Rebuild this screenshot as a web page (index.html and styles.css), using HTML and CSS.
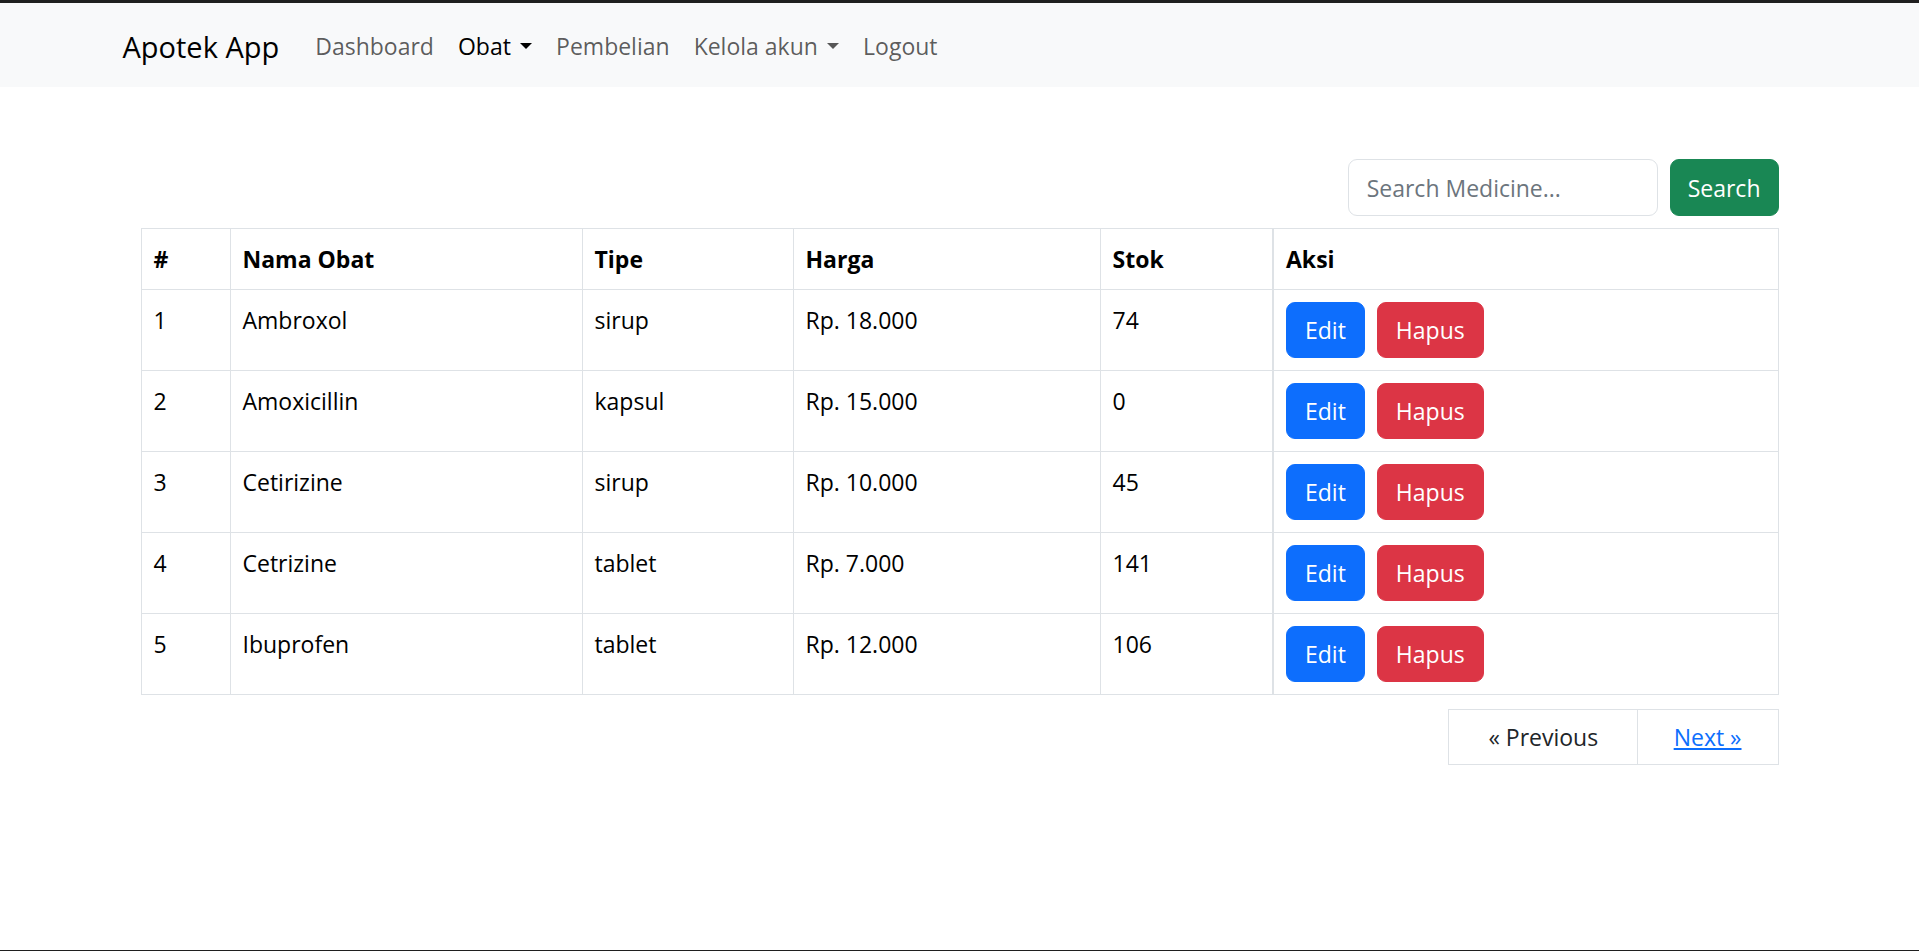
FILE: index.html
```html
<!DOCTYPE html>
<html lang="id">
<head>
<meta charset="utf-8">
<title>Apotek App</title>
<link rel="stylesheet" href="styles.css">
</head>
<body>
<nav class="navbar">
  <div class="nav-container">
    <a class="brand" href="#">Apotek App</a>
    <ul class="nav-list">
      <li><a class="nav-link" href="#">Dashboard</a></li>
      <li><a class="nav-link active dropdown" href="#">Obat</a></li>
      <li><a class="nav-link" href="#">Pembelian</a></li>
      <li><a class="nav-link dropdown" href="#">Kelola akun</a></li>
      <li><a class="nav-link" href="#">Logout</a></li>
    </ul>
  </div>
</nav>
<main class="container">
  <div class="content">
    <form class="search-form">
      <input class="search-input" type="text" placeholder="Search Medicine...">
      <button class="btn btn-green" type="button">Search</button>
    </form>
    <table class="data-table">
      <thead>
        <tr>
          <th class="c-no">#</th>
          <th class="c-nama">Nama Obat</th>
          <th class="c-tipe">Tipe</th>
          <th class="c-harga">Harga</th>
          <th class="c-stok">Stok</th>
          <th class="c-aksi">Aksi</th>
        </tr>
      </thead>
      <tbody>
        <tr><td>1</td><td>Ambroxol</td><td>sirup</td><td>Rp. 18.000</td><td>74</td><td class="aksi"><div class="actions"><a class="btn btn-blue" href="#">Edit</a><a class="btn btn-red" href="#">Hapus</a></div></td></tr>
        <tr><td>2</td><td>Amoxicillin</td><td>kapsul</td><td>Rp. 15.000</td><td>0</td><td class="aksi"><div class="actions"><a class="btn btn-blue" href="#">Edit</a><a class="btn btn-red" href="#">Hapus</a></div></td></tr>
        <tr><td>3</td><td>Cetirizine</td><td>sirup</td><td>Rp. 10.000</td><td>45</td><td class="aksi"><div class="actions"><a class="btn btn-blue" href="#">Edit</a><a class="btn btn-red" href="#">Hapus</a></div></td></tr>
        <tr><td>4</td><td>Cetrizine</td><td>tablet</td><td>Rp. 7.000</td><td>141</td><td class="aksi"><div class="actions"><a class="btn btn-blue" href="#">Edit</a><a class="btn btn-red" href="#">Hapus</a></div></td></tr>
        <tr><td>5</td><td>Ibuprofen</td><td>tablet</td><td>Rp. 12.000</td><td>106</td><td class="aksi"><div class="actions"><a class="btn btn-blue" href="#">Edit</a><a class="btn btn-red" href="#">Hapus</a></div></td></tr>
      </tbody>
    </table>
    <div class="pagination">
      <span class="page-link prev">« Previous</span>
      <a class="page-link next" href="#">Next »</a>
    </div>
  </div>
</main>
</body>
</html>
```
FILE: styles.css
```css
html {
  height: 100%;
}
body {
  margin: 0;
  min-height: 100%;
  box-sizing: border-box;
  border-top: 3px solid #1f1f1f;
  border-bottom: 1px solid #1f1f1f;
  font-family: "Open Sans", "Noto Sans", sans-serif;
  font-size: 23px;
  line-height: 36px;
  color: #212529;
  background: #fff;
}
*, *::before, *::after {
  box-sizing: border-box;
}

.navbar {
  background: #f8f9fa;
  padding: 12px 0;
}
.nav-container {
  width: 1710px;
  margin: 0 auto;
  padding: 0 18px;
  display: flex;
  align-items: center;
}
.brand {
  font-size: 29px;
  line-height: 45px;
  padding: 8.5px 0 6.5px;
  margin-right: 24px;
  color: #000;
  text-decoration: none;
}
.nav-list {
  list-style: none;
  margin: 0;
  padding: 0;
  display: flex;
}
.nav-link {
  display: block;
  padding: 13px 12px 11px;
  color: rgba(0, 0, 0, 0.65);
  text-decoration: none;
}
.nav-link.active {
  color: #000;
}
.dropdown::after {
  content: "";
  display: inline-block;
  margin-left: 0.4em;
  vertical-align: 0.255em;
  border-top: 0.3em solid;
  border-right: 0.3em solid transparent;
  border-left: 0.3em solid transparent;
}

.container {
  width: 1710px;
  margin: 0 auto;
  padding: 0 18px;
}
.content {
  padding: 0 18px;
}
.search-form {
  display: flex;
  justify-content: flex-end;
  gap: 12px;
  margin: 72px 0 12px;
}
.search-input {
  width: 310px;
  height: 57px;
  padding: 9px 18px;
  font: inherit;
  color: #212529;
  border: 1.5px solid #dee2e6;
  border-radius: 9px;
  background: #fff;
}
.search-input::placeholder {
  color: #6c757d;
}

.btn {
  display: inline-block;
  font: inherit;
  padding: 9px 18px;
  border: 1.5px solid transparent;
  border-radius: 9px;
  color: #fff;
  text-decoration: none;
  cursor: pointer;
}
.btn-green {
  background: #198754;
  border-color: #198754;
  padding: 9px 17px;
}
.btn-blue {
  background: #0d6efd;
  border-color: #0d6efd;
}
.btn-red {
  background: #dc3545;
  border-color: #dc3545;
}

.data-table {
  width: 100%;
  border-collapse: collapse;
  table-layout: fixed;
  color: #000;
  vertical-align: top;
}
.data-table th,
.data-table td {
  border: 1px solid #dee2e6;
  padding: 12px 12px;
  text-align: left;
  vertical-align: top;
}
.data-table th {
  font-weight: 700;
}
.c-no { width: 89px; }
.c-nama { width: 352px; }
.c-tipe { width: 211px; }
.c-harga { width: 307px; }
.c-stok { width: 173px; }
.data-table .c-aksi,
.data-table .aksi {
  border-left: 2px solid #dee2e6;
}
.actions {
  display: flex;
  gap: 12px;
}

.pagination {
  display: flex;
  justify-content: flex-end;
  margin-top: 14px;
}
.page-link {
  display: block;
  padding: 9px 36px;
  border: 1.5px solid #dee2e6;
  color: #212529;
  background: #fff;
}
.page-link.prev {
  padding: 9px 39px;
}
.page-link.next {
  margin-left: -1.5px;
  color: #0d6efd;
  text-decoration: underline;
}
```
